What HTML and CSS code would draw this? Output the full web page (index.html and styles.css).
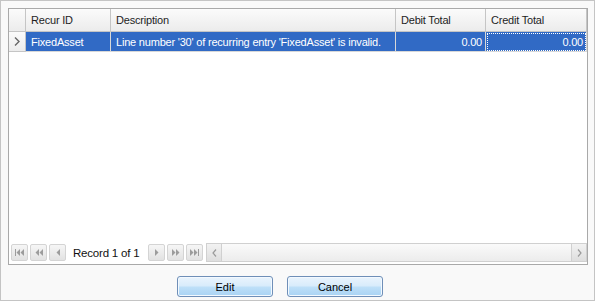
FILE: index.html
```html
<!DOCTYPE html>
<html lang="en">
<head>
  <meta charset="UTF-8" />
  <title>Recurring Entries</title>
  <link rel="stylesheet" href="styles.css">
</head>
<body>
  <div class="window">
    <div class="grid">
      <div class="row head">
        <div class="cell sel"></div>
        <div class="cell c-id">Recur ID</div>
        <div class="cell c-desc">Description</div>
        <div class="cell c-debit">Debit Total</div>
        <div class="cell c-credit">Credit Total</div>
      </div>
      <div class="row data">
        <div class="cell sel"><svg width="6" height="9" viewBox="0 0 6 9"><path d="M1 0.5l4 4-4 4" fill="none" stroke="#666" stroke-width="1.4"/></svg></div>
        <div class="cell c-id">FixedAsset</div>
        <div class="cell c-desc">Line number '30' of recurring entry 'FixedAsset' is invalid.</div>
        <div class="cell c-debit num">0.00</div>
        <div class="cell c-credit num focus">0.00</div>
      </div>
      <div class="empty"></div>
      <div class="nav">
        <button class="nb"><svg width="9" height="7" viewBox="0 0 9 7"><rect x="0" y="0" width="1" height="7"/><path d="M5 0v7L1.5 3.5zM9 0v7L5.5 3.5z"/></svg></button>
        <button class="nb"><svg width="8" height="7" viewBox="0 0 8 7"><path d="M4 0v7L0.5 3.5zM8 0v7L4.5 3.5z"/></svg></button>
        <button class="nb"><svg width="4" height="7" viewBox="0 0 4 7"><path d="M4 0v7L0.5 3.5z"/></svg></button>
        <span class="rec">Record 1 of 1</span>
        <button class="nb"><svg width="4" height="7" viewBox="0 0 4 7"><path d="M0 0v7l3.5-3.5z"/></svg></button>
        <button class="nb"><svg width="8" height="7" viewBox="0 0 8 7"><path d="M0 0v7l3.5-3.5zM4 0v7l3.5-3.5z"/></svg></button>
        <button class="nb"><svg width="9" height="7" viewBox="0 0 9 7"><path d="M0 0v7l3.5-3.5zM4 0v7l3.5-3.5z"/><rect x="8" y="0" width="1" height="7"/></svg></button>
        <div class="hscroll">
          <span class="sb"><svg width="5" height="8" viewBox="0 0 5 8"><path d="M4 0.5L1 4l3 3.5" fill="none" stroke="#9a9a9a" stroke-width="1.2"/></svg></span>
          <span class="track"></span>
          <span class="sb"><svg width="5" height="8" viewBox="0 0 5 8"><path d="M1 0.5L4 4l-3 3.5" fill="none" stroke="#9a9a9a" stroke-width="1.2"/></svg></span>
        </div>
      </div>
    </div>
    <div class="actions">
      <button class="btn">Edit</button>
      <button class="btn">Cancel</button>
    </div>
  </div>
</body>
</html>
```

FILE: styles.css
```css
body {
  margin: 0;
  font-family: "Liberation Sans", Arial, sans-serif;
  font-size: 11px;
  letter-spacing: -0.2px;
  color: #000;
  background: #fff;
}

.window {
  width: 595px;
  height: 301px;
  border: 1px solid #c4c4c4;
  background: #f9f9f9;
  padding: 7px 6px 0 7px;
  box-sizing: border-box;
  display: flex;
  flex-direction: column;
}

.grid {
  height: 257px;
  border: 1px solid #a9a9a9;
  background: #fff;
  display: flex;
  flex-direction: column;
  box-sizing: border-box;
}

.row {
  display: grid;
  grid-template-columns: 17px 85px 285px 90px 101px;
}

.cell {
  white-space: nowrap;
  overflow: hidden;
  padding: 0 5px;
  display: flex;
  align-items: center;
  box-sizing: border-box;
}

.head {
  height: 23px;
}

.head .cell {
  background: linear-gradient(#fbfbfb, #ececec);
  border-right: 1px solid #c5c5c5;
  border-bottom: 1px solid #c5c5c5;
  color: #1e1e1e;
}

.data {
  height: 20px;
}

.data .cell {
  background: #316ac5;
  color: #fff;
  border-right: 1px solid #d8d8d8;
  border-bottom: 1px solid #d8d8d8;
}

.data .sel {
  background: linear-gradient(#fbfbfb, #ececec);
  border-color: #c5c5c5;
  justify-content: center;
  padding: 0;
}

.num {
  justify-content: flex-end;
  padding-right: 3px;
}

.focus {
  outline: 1px dotted #fff;
  outline-offset: -2px;
}

.empty {
  flex: 1;
}

.nav {
  height: 21px;
  display: flex;
  align-items: center;
  padding: 0 0 1px 2px;
  gap: 2px;
}

.nb {
  width: 17px;
  height: 17px;
  padding: 0;
  margin: 0;
  border: 1px solid #d4d4d4;
  border-radius: 2px;
  background: linear-gradient(#f6f6f6, #e2e2e2);
  display: flex;
  align-items: center;
  justify-content: center;
  fill: #9c9c9c;
}

.rec {
  padding: 0 7px 0 5px;
  font-size: 11.5px;
  color: #111;
}

.hscroll {
  flex: 1;
  height: 17px;
  margin-left: 1px;
  display: flex;
  border: 1px solid #d0d0d0;
  background: linear-gradient(#fafafa, #ececec);
}

.sb {
  width: 14px;
  display: flex;
  align-items: center;
  justify-content: center;
  background: linear-gradient(#f2f2f2, #dedede);
  border-right: 1px solid #d0d0d0;
}

.sb:last-child {
  border-right: 0;
  border-left: 1px solid #d0d0d0;
}

.track {
  flex: 1;
}

.actions {
  display: flex;
  gap: 14px;
  padding: 11px 0 0 169px;
}

.btn {
  width: 96px;
  height: 21px;
  font-family: "Liberation Sans", Arial, sans-serif;
  font-size: 11px;
  color: #000;
  border: 1px solid #6f8fb8;
  border-radius: 3px;
  background: linear-gradient(#eaf4fd 0%, #d9ecfb 45%, #bddff8 55%, #a9d3f4 100%);
  box-shadow: inset 0 0 0 1px #f3f9ff;
  padding: 0;
}
```
